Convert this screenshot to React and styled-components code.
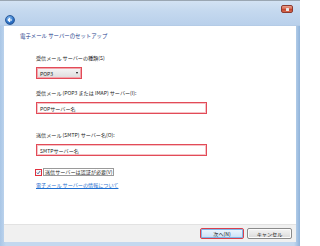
import React from "react";
import styled, { createGlobalStyle } from "styled-components";

const Global = createGlobalStyle`
  html, body { margin: 0; padding: 0; background: #fff; }
  body { width: 300px; height: 246px; overflow: hidden; }
  * { box-sizing: border-box; }
`;

const FONT = `"Noto Sans CJK JP", "Liberation Sans", sans-serif`;
const SMALL = "5.1px";

const Window = styled.div`
  width: 300px;
  height: 246px;
  display: flex;
  flex-direction: column;
  background: linear-gradient(90deg, #a9c6e6 0%, #c3d8ef 2%, #c3d8ef 98%, #8fb3da 100%);
  border-top: 1px solid #9aa6b2;
  padding: 0 4px 4px 4px;
  font-family: ${FONT};
  color: #1a1a1a;
`;

const TitleBar = styled.div`
  height: 25px;
  margin: 0 -4px;
  padding: 3px 7px 0 5px;
  display: flex;
  align-items: flex-start;
  justify-content: space-between;
  background: linear-gradient(180deg, #d3e2f3 0%, #c5d9ef 40%, #b9d0eb 100%);
  border-bottom: 1px solid #b4cbe6;
`;

const BackButton = styled.div`
  margin-top: 11px;
  width: 10px;
  height: 10px;
  border-radius: 50%;
  background: radial-gradient(circle at 40% 30%, #8fc0f0 0%, #2f74c8 55%, #1c4f99 100%);
  border: 1px solid #2a5a9a;
  display: flex;
  align-items: center;
  justify-content: center;
`;

const CloseButton = styled.div`
  margin-top: 1px;
  width: 12px;
  height: 8px;
  border-radius: 2px;
  border: 1px solid #8c3a30;
  background: linear-gradient(180deg, #e9a08e 0%, #d86a52 45%, #c4432c 55%, #d56a50 100%);
  display: flex;
  align-items: center;
  justify-content: center;
`;

const CloseMark = styled.div`
  width: 3px;
  height: 3px;
  background: #e8e8e8;
  border-radius: 0.5px;
`;

const Content = styled.div`
  flex: 1;
  background: #ffffff;
  padding: 6px 0 0 16px;
  display: flex;
  flex-direction: column;
  align-items: flex-start;
`;

const Heading = styled.div`
  font-size: 5.4px;
  line-height: 8px;
  height: 8px;
  color: #1e3c8c;
  white-space: nowrap;
`;

const Form = styled.div`
  margin-left: 16px;
  display: flex;
  flex-direction: column;
  align-items: flex-start;
`;

const Label = styled.div`
  margin-top: ${(p) => p.$gap}px;
  font-size: ${SMALL};
  line-height: 6px;
  height: 6px;
  color: #222;
  white-space: nowrap;
`;

const Select = styled.div`
  margin-top: 6px;
  width: 46px;
  height: 12px;
  border: 1px solid #e24b58;
  box-shadow: inset 0 0 0 1px #f3a4ab;
  background: linear-gradient(180deg, #f6f6f6 0%, #e9e9e9 50%, #dcdcdc 100%);
  display: flex;
  align-items: center;
  justify-content: space-between;
  padding: 0 3px 0 3px;
  font-size: ${SMALL};
  color: #222;
`;

const Arrow = styled.div`
  width: 0;
  height: 0;
  border-left: 1.5px solid transparent;
  border-right: 1.5px solid transparent;
  border-top: 2px solid #111;
`;

const TextBox = styled.div`
  margin-top: 6px;
  width: 171px;
  height: 12px;
  border: 1px solid #e24b58;
  box-shadow: inset 0 0 0 1px #f6c2c6;
  background: #fff;
  display: flex;
  align-items: center;
  padding-left: 3px;
  font-size: ${SMALL};
  color: #222;
  white-space: nowrap;
`;

const CheckRow = styled.div`
  margin-top: 12px;
  display: flex;
  align-items: center;
  height: 8px;
  margin-left: -1px;
`;

const CheckBox = styled.div`
  width: 7px;
  height: 7px;
  border: 1px solid #e0303e;
  background: #f4f7fb;
  display: flex;
  align-items: center;
  justify-content: center;
`;

const CheckLabel = styled.div`
  margin-left: 1px;
  font-size: ${SMALL};
  line-height: 6px;
  padding: 0 1px;
  border: 1px solid #9a9a9a;
  white-space: nowrap;
  color: #222;
`;

const Link = styled.div`
  margin-top: 6px;
  font-size: ${SMALL};
  line-height: 6px;
  color: #1f6fd0;
  text-decoration: underline;
  white-space: nowrap;
`;

const Footer = styled.div`
  height: 18px;
  background: #f0f0f0;
  border-top: 1px solid #e2e2e2;
  display: flex;
  justify-content: flex-end;
  align-items: flex-start;
  padding: 3px 4px 0 0;
  gap: 3px;
`;

const Button = styled.div`
  width: ${(p) => p.$w}px;
  height: 11px;
  border-radius: 2px;
  border: 1px solid ${(p) => (p.$focus ? "#d9404d" : "#8a8a8a")};
  box-shadow: ${(p) => (p.$focus ? "inset 0 0 0 1px #7fb6e8" : "inset 0 0 0 1px #fbfbfb")};
  background: ${(p) =>
    p.$focus
      ? "linear-gradient(180deg, #eef6fd 0%, #dcecfb 50%, #c8e0f6 100%)"
      : "linear-gradient(180deg, #f4f4f4 0%, #e8e8e8 50%, #d8d8d8 100%)"};
  display: flex;
  align-items: center;
  justify-content: center;
  font-size: ${SMALL};
  color: #222;
  white-space: nowrap;
`;

export default function App() {
  return (
    <>
      <Global />
      <Window>
        <TitleBar>
          <BackButton>
            <svg width="6" height="6" viewBox="0 0 6 6">
              <path d="M5 3H1.5M3 1.2L1.2 3L3 4.8" stroke="#fff" strokeWidth="1.1" fill="none" />
            </svg>
          </BackButton>
          <CloseButton>
            <CloseMark />
          </CloseButton>
        </TitleBar>
        <Content>
          <Heading>電子メール サーバーのセットアップ</Heading>
          <Form>
            <Label $gap={15}>受信メール サーバーの種類(S)</Label>
            <Select>
              <span>POP3</span>
              <Arrow />
            </Select>
            <Label $gap={11}>受信メール (POP3 または IMAP) サーバー(I):</Label>
            <TextBox>POPサーバー名</TextBox>
            <Label $gap={18}>送信メール (SMTP) サーバー名(O):</Label>
            <TextBox>SMTPサーバー名</TextBox>
            <CheckRow>
              <CheckBox>
                <svg width="5" height="5" viewBox="0 0 5 5">
                  <path d="M0.8 2.6L2 3.8L4.2 1" stroke="#3a5a8a" strokeWidth="0.9" fill="none" />
                </svg>
              </CheckBox>
              <CheckLabel>送信サーバーは認証が必要(V)</CheckLabel>
            </CheckRow>
            <Link>電子メール サーバーの情報について</Link>
          </Form>
        </Content>
        <Footer>
          <Button $w={44} $focus>次へ(N)</Button>
          <Button $w={45}>キャンセル</Button>
        </Footer>
      </Window>
    </>
  );
}
